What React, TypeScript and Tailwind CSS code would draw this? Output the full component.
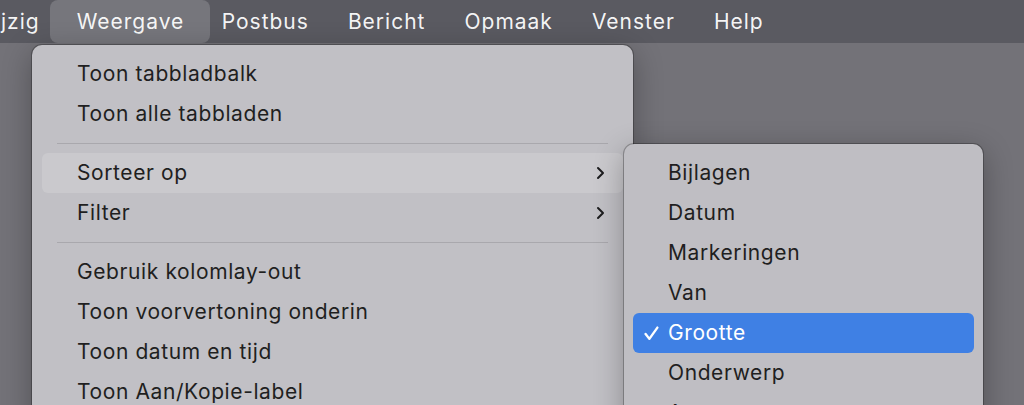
import React from 'react';

const barItems = ['Postbus', 'Bericht', 'Opmaak', 'Venster', 'Help'];

const Chevron: React.FC = () => (
  <svg width="9" height="14" viewBox="0 0 9 14" fill="none" className="text-[#1d1d1f]">
    <path d="M2 2l5 5-5 5" stroke="currentColor" strokeWidth="2" strokeLinecap="round" strokeLinejoin="round" />
  </svg>
);

const Check: React.FC = () => (
  <svg width="15" height="15" viewBox="0 0 14 14" fill="none" className="text-white">
    <path d="M1.5 7.5l3.5 4.5 7.5-10.5" stroke="currentColor" strokeWidth="2.2" strokeLinecap="round" strokeLinejoin="round" />
  </svg>
);

const Row: React.FC<{ label: string; sub?: boolean; active?: boolean }> = ({ label, sub, active }) => (
  <div
    className={`mx-[10px] h-[40px] flex items-center pl-[35px] pr-[18px] rounded-[6px] ${active ? 'bg-[#cac9cd]' : ''}`}
  >
    <span className="flex-1">{label}</span>
    {sub && <Chevron />}
  </div>
);

const Separator: React.FC = () => (
  <div className="h-[19px] flex items-center px-[25px]">
    <div className="h-px w-full bg-[#a9a8ad]" />
  </div>
);

const sortItems = ['Bijlagen', 'Datum', 'Markeringen', 'Van', 'Grootte', 'Onderwerp', 'Aan'];

export default function App() {
  return (
    <div className="relative w-[1024px] h-[405px] overflow-hidden bg-[#737278] font-['Inter',sans-serif] text-[21px] tracking-[0.6px]">
      <header className="h-[43px] bg-[#5a5a61] flex items-center text-white/95 tracking-[1px]">
        <span className="ml-[1px]">jzig</span>
        <span className="ml-[10px] h-[43px] w-[160px] pl-[27px] flex items-center rounded-[8px] bg-[#76767c]">Weergave</span>
        {barItems.map((b, i) => (
          <span key={b} className={i === 0 ? 'ml-[12px]' : 'ml-[39px]'}>
            {b}
          </span>
        ))}
      </header>

      {/* Weergave menu */}
      <div className="absolute left-[32px] top-[45px] w-[601px] h-[380px] rounded-[10px] bg-[#c1c0c5] ring-1 ring-black/25 shadow-[0_8px_30px_rgba(0,0,0,0.3)] pt-[9px] text-[#1f1f21]">
        <Row label="Toon tabbladbalk" />
        <Row label="Toon alle tabbladen" />
        <Separator />
        <Row label="Sorteer op" sub active />
        <Row label="Filter" sub />
        <Separator />
        <Row label="Gebruik kolomlay-out" />
        <Row label="Toon voorvertoning onderin" />
        <Row label="Toon datum en tijd" />
        <Row label="Toon Aan/Kopie-label" />
      </div>

      {/* Sorteer op submenu */}
      <div className="absolute left-[624px] top-[144px] w-[359px] h-[300px] rounded-[10px] bg-[#bfbec3] ring-1 ring-black/25 shadow-[0_8px_30px_rgba(0,0,0,0.3)] pt-[9px] text-[#1f1f21]">
        {sortItems.map((s) => {
          const on = s === 'Grootte';
          return (
            <div
              key={s}
              className={`mx-[9px] h-[40px] flex items-center rounded-[6px] ${on ? 'bg-[#3f80e4] text-white' : ''}`}
            >
              <span className="w-[35px] flex justify-center pl-[2px]">{on && <Check />}</span>
              <span>{s}</span>
            </div>
          );
        })}
      </div>
    </div>
  );
}
